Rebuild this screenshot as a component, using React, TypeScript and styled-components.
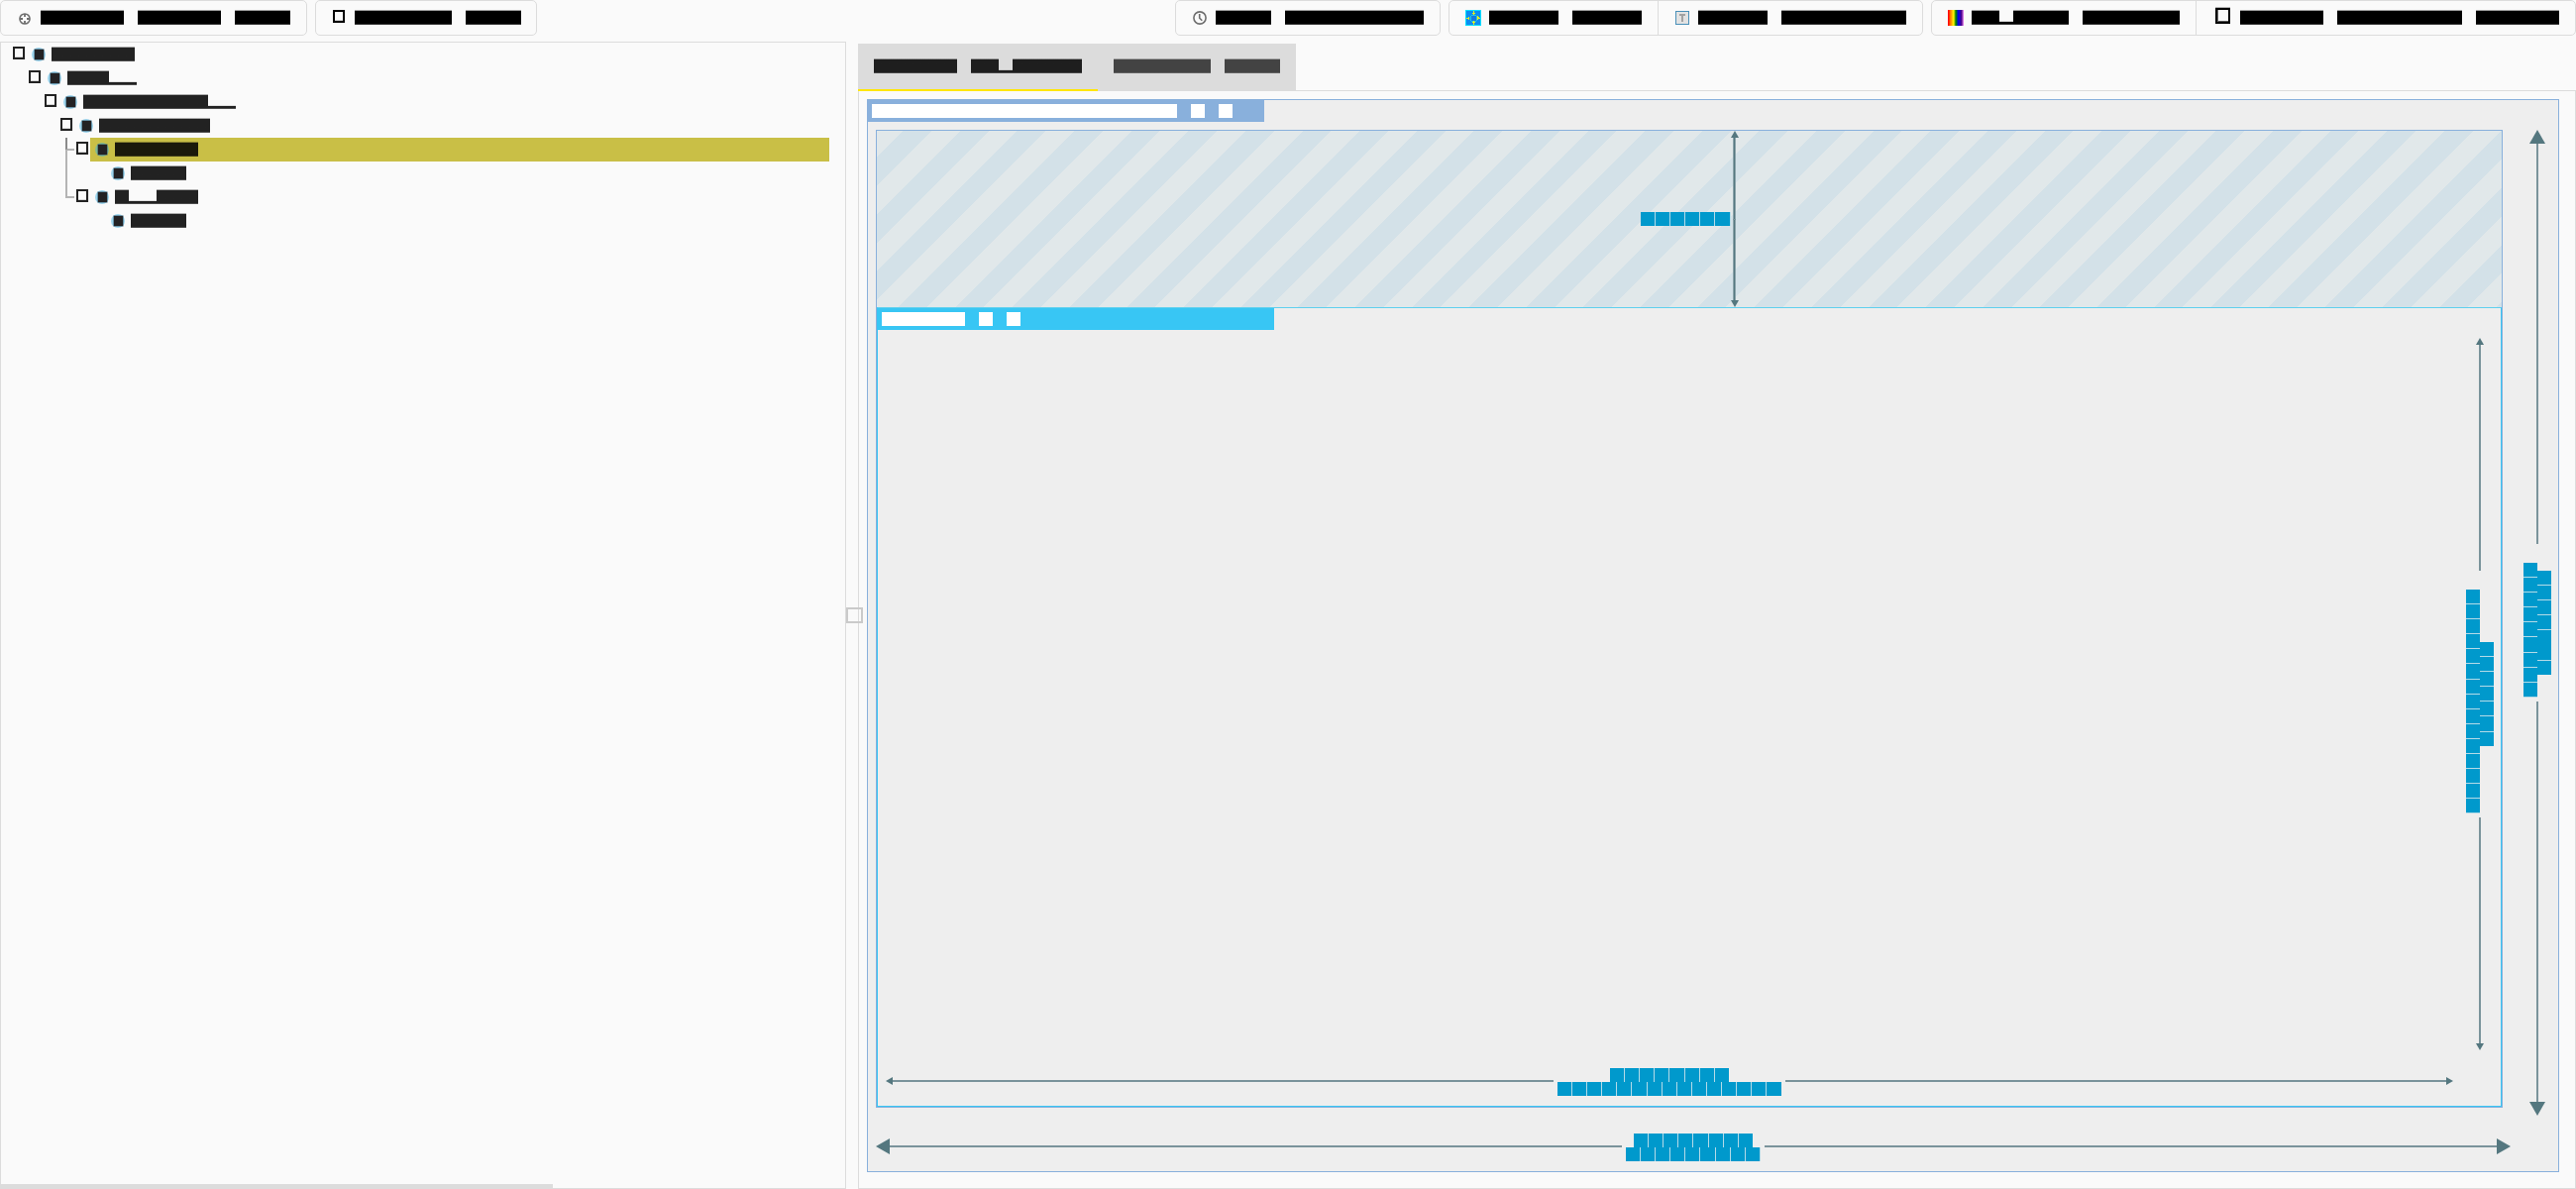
import React from 'react';
import styled, { createGlobalStyle, css } from 'styled-components';

const EDGE = '#dcdcdc';
const DUSTY = '#89b0dc';
const CYAN = '#38c6f4';
const STEEL = '#54777f';
const STEEL_LINE = '#7a939b';
const DIM = '#0099cc';

const Global = createGlobalStyle`
  html, body { margin: 0; background: #fafafa; overflow: hidden; }
  body { font: 14px/14px "Liberation Sans", Arial, sans-serif; color: #000; }
  * { box-sizing: border-box; }
`;

/* ---------- block glyph text ---------- */

const Line = styled.span<{ $color?: string }>`
  display: flex;
  flex: none;
  height: 15px;
  color: ${(p) => p.$color ?? '#000'};
`;

const Run = styled.span<{ $n: number; $kind: string }>`
  width: ${(p) => p.$n * 14}px;
  height: 15px;
  ${(p) =>
    p.$kind === 'X' &&
    css`
      background: linear-gradient(
        color-mix(in srgb, currentColor 36%, transparent) 1px,
        currentColor 1px 14px,
        color-mix(in srgb, currentColor 80%, transparent) 14px
      );
    `}
  ${(p) =>
    p.$kind === 'p' &&
    css`
      height: 3px;
      margin-top: 12px;
      background: linear-gradient(currentColor 2px, color-mix(in srgb, currentColor 80%, transparent) 2px);
      box-shadow: 0 -1px 0 color-mix(in srgb, currentColor 12%, transparent);
    `}
`;

function Blocks({ run, color }: { run: string; color?: string }) {
  const parts = run.match(/X+|p+| +/g) ?? [];
  return (
    <Line $color={color}>
      {parts.map((s, i) => (
        <Run key={i} $n={s.length} $kind={s[0]} />
      ))}
    </Line>
  );
}

const Missing = styled.span<{ $w: number; $h: number; $b?: number; $color?: string }>`
  flex: none;
  width: ${(p) => p.$w}px;
  height: ${(p) => p.$h}px;
  border: ${(p) => p.$b ?? 2}px solid ${(p) => p.$color ?? '#000'};
  box-shadow: inset 0 -1px 0 #d4d4d4, 1px 0 0 #ececec;
`;

/* ---------- toolbar ---------- */

const Page = styled.div`
  width: 2600px;
  height: 1200px;
  display: flex;
  flex-direction: column;
`;

const Toolbar = styled.div`
  display: flex;
  gap: 8px;
  height: 36px;
`;

const Spacer = styled.div`
  flex: 1;
`;

const Group = styled.div`
  display: flex;
  height: 36px;
  border: 1px solid ${EDGE};
  border-radius: 5px;
`;

const Button = styled.div<{ $left: number; $gap: number; $right?: number }>`
  display: flex;
  padding: 9px ${(p) => p.$right ?? 16}px 0 ${(p) => p.$left}px;
  gap: ${(p) => p.$gap}px;
  & + & {
    border-left: 1px solid ${EDGE};
  }
`;

const Icon = styled.svg<{ $top?: number }>`
  display: block;
  flex: none;
  margin-top: ${(p) => p.$top ?? 0}px;
`;

const Rainbow = styled.span`
  width: 16px;
  height: 16px;
  background: linear-gradient(
    90deg,
    #ff0000 1px, #ff3300 1px 2px, #ff7700 2px 3px, #ff9900 3px 4px, #ffc400 4px 5px, #ffee00 5px 6px,
    #b8d800 6px 7px, #3c9a00 7px 8px, #00701c 8px 9px, #003c84 9px 10px, #0000e0 10px 11px, #1a00d8 11px 12px,
    #2c00b4 12px 13px, #4b0090 13px 14px, #8038b0 14px 15px, #d873dc 15px
  );
`;

const TallBox = styled(Missing)`
  margin-top: -2px;
  box-shadow: inset 1px 0 0 #6a6a6a, inset 0 -1px 0 #555, 0 -1px 0 #b4b4b4;
`;

function TargetIcon() {
  return (
    <Icon width="12" height="12" viewBox="0 0 12 12" $top={3}>
      <circle cx="6" cy="6" r="5.1" fill="none" stroke="#6e6e6e" strokeWidth="1.5" />
      <path d="M6 1v3M6 8v3M1 6h3M8 6h3" stroke="#6e6e6e" strokeWidth="1.8" />
    </Icon>
  );
}

function ClockIcon() {
  return (
    <Icon width="14" height="14" viewBox="0 0 14 14" $top={1}>
      <circle cx="7" cy="7" r="6.1" fill="none" stroke="#6e6e6e" strokeWidth="1.6" />
      <path d="M6.7 3v4.2l2.6 2.6" fill="none" stroke="#6e6e6e" strokeWidth="1.6" />
    </Icon>
  );
}

function GuidesIcon() {
  return (
    <Icon width="16" height="16" viewBox="0 0 16 16" shapeRendering="crispEdges">
      <rect width="16" height="16" fill="#00e0ff" />
      <rect x="1" y="1" width="14" height="14" fill="#0a8cf0" />
      <path d="M6 5h5v1h1v5h-1v1h-5v-1h-1v-5h1z" fill="#22c8e0" />
      <rect x="6" y="6" width="5" height="5" fill="#1478e0" />
      <path
        d="M8 1h1v2h1v1h-1v1h-1v-1h-1v-1h1zM8 15h1v-2h1v-1h-1v-1h-1v1h-1v1h1zM1 8h2v-1h1v3h-1v-1h-2zM15 8h-1v-1h-1v-1h-1v4h1v-1h2z"
        fill="#e6ee1c"
      />
    </Icon>
  );
}

function BaselineIcon() {
  return (
    <Icon width="14" height="14" viewBox="0 0 14 14" shapeRendering="crispEdges" $top={1}>
      <rect width="14" height="14" fill="#4a90b8" />
      <rect x="1" y="1" width="12" height="12" fill="#e2e2e2" />
      <path d="M4 3h6v2h-2v6h-2v-6h-2z" fill="#a2a2a2" />
    </Icon>
  );
}

/* ---------- widget tree ---------- */

const Workspace = styled.div`
  flex: 1;
  display: flex;
  min-height: 0;
`;

const TreePanel = styled.div`
  position: relative;
  width: 854px;
  height: 1158px;
  margin-top: 6px;
  border: 1px solid ${EDGE};
`;

const Row = styled.div<{ $depth: number }>`
  position: relative;
  display: flex;
  height: 24px;
  padding: 4px 0 0 ${(p) => 12 + p.$depth * 16}px;
`;

const Body = styled.div<{ $selected?: boolean }>`
  display: flex;
  gap: 6px;
  height: 24px;
  margin-top: -4px;
  padding: 4px 0 0 5px;
  margin-left: 2px;
  ${(p) =>
    p.$selected &&
    css`
      width: 746px;
      background: #c9bf46;
    `}
`;

const Toggle = styled(Missing)<{ $hidden?: boolean }>`
  visibility: ${(p) => (p.$hidden ? 'hidden' : 'visible')};
`;

const Dot = styled.span<{ $selected?: boolean }>`
  display: flex;
  align-items: center;
  justify-content: center;
  width: 14px;
  height: 14px;
  margin-top: 1px;
  border-radius: 50%;
  background: ${(p) => (p.$selected ? '#82ba92' : '#9fd6ee')};
  &::after {
    content: '';
    width: 9px;
    height: 10px;
    background: #232224;
    box-shadow: 0 0 0 0.5px #35566a;
  }
`;

const Guide = styled.span<{ $h: number; $color: string }>`
  position: absolute;
  left: 65px;
  top: ${(p) => 12 - p.$h}px;
  width: 9px;
  height: ${(p) => p.$h + 1}px;
  border-left: 2px solid ${(p) => p.$color};
  border-bottom: 2px solid #b4b4b4;
`;

const ScrollThumb = styled.div`
  position: absolute;
  left: -1px;
  bottom: -1px;
  width: 558px;
  height: 5px;
  background: ${EDGE};
`;

type Node = { run: string; depth: number; leaf?: boolean; selected?: boolean; guide?: [number, string] };

const tree: Node[] = [
  { run: 'XXXXXX', depth: 0 },
  { run: 'XXXpp', depth: 1 },
  { run: 'XXXXXXXXXpp', depth: 2 },
  { run: 'XXXXXXXX', depth: 3 },
  { run: 'XXXXXX', depth: 4, selected: true, guide: [12, '#8a8a8a'] },
  { run: 'XXXX', depth: 5, leaf: true },
  { run: 'XppXXX', depth: 4, guide: [48, '#b4b4b4'] },
  { run: 'XXXX', depth: 5, leaf: true },
];

/* ---------- splitter ---------- */

const Splitter = styled.div`
  position: relative;
  width: 12px;
`;

const Grip = styled.div`
  position: absolute;
  left: 0;
  top: 577px;
  width: 17px;
  height: 16px;
  border: 2px solid #cacaca;
  z-index: 1;
`;

/* ---------- details ---------- */

const Details = styled.div`
  width: 1734px;
  display: flex;
  flex-direction: column;
`;

const Tabs = styled.div`
  display: flex;
  height: 48px;
  margin-top: 8px;
  box-shadow: inset 0 -1px 0 ${EDGE};
`;

const Tab = styled.div<{ $active?: boolean }>`
  height: 48px;
  padding: 15px 16px 0;
  background: #dcdcdc;
  border-bottom: 2px solid ${(p) => (p.$active ? '#ffe600' : '#dcdcdc')};
`;

const Pane = styled.div`
  flex: 1;
  border: 1px solid ${EDGE};
  border-top: 0;
  padding: 8px 16px 16px 8px;
`;

const Outer = styled.div`
  height: 1083px;
  border: 1px solid ${DUSTY};
  background: #eeeeee;
  display: grid;
  padding-left: 8px;
  grid-template-columns: 1642px 1fr;
  grid-template-rows: 30px 987px 1fr;
`;

const Title = styled.div<{ $color: string; $shift?: number }>`
  display: flex;
  width: 400px;
  height: 22px;
  margin-left: ${(p) => p.$shift ?? 0}px;
  padding: 4px 0 0 4px;
  background: ${(p) => p.$color};
`;

const TitleWord = styled.span<{ $n: number }>`
  width: ${(p) => p.$n * 14}px;
  height: 14px;
  margin-right: 14px;
  background: #fff;
`;

const Inner = styled.div`
  border: 1px solid ${DUSTY};
  display: flex;
  flex-direction: column;
`;

const Stripes = styled.div`
  display: flex;
  align-items: center;
  height: 178px;
  padding-left: 771px;
  background: repeating-linear-gradient(
    135deg,
    #e1e8ea 0 18.88px,
    #d3e1e8 18.88px 39.25px,
    #e1e8ea 39.25px 40.74px
  );
`;

const Child = styled.div`
  flex: 1;
  border: 1px solid ${CYAN};
  border-top-color: #5fd0ee;
  display: flex;
  flex-direction: column;
`;

const ArrowRow = styled.div<{ $w: number }>`
  display: flex;
  align-items: center;
  width: ${(p) => p.$w}px;
  height: 30px;
`;

const ArrowCol = styled.div<{ $h: number }>`
  display: flex;
  flex-direction: column;
  align-items: center;
  width: 30px;
  height: ${(p) => p.$h}px;
`;

const Stroke = styled.div<{ $vertical?: boolean }>`
  flex: 1;
  background: ${STEEL_LINE};
  ${(p) => (p.$vertical ? 'width: 2px;' : 'height: 2px;')}
`;

const LabelRow = styled.div`
  display: flex;
  flex-direction: column;
  align-items: center;
  padding: 1px 4px 0;
`;

const LabelCol = styled.div`
  display: flex;
  flex-direction: row-reverse;
  align-items: center;
  padding: 4px 0;
`;

const Cells = styled.div<{ $n: number; $lead: number; $vertical?: boolean }>`
  flex: none;
  ${(p) => {
    const span = p.$n * 15.1;
    const dir = p.$vertical ? 'to bottom' : 'to right';
    const pad = p.$lead * 15.1;
    return css`
      ${p.$vertical ? `width: 14px; height: ${span}px; margin-top: ${pad}px;` : `height: 14px; width: ${span}px;`}
      background: repeating-linear-gradient(${dir}, ${DIM} 0 14.1px, #b4dbe8 14.1px 15.1px);
    `;
  }}
`;

function Head({ dir, size }: { dir: 'up' | 'down' | 'left' | 'right'; size: number }) {
  const wide = size;
  const long = size === 16 ? 14 : 7;
  const vertical = dir === 'up' || dir === 'down';
  const w = vertical ? wide : long;
  const h = vertical ? long : wide;
  const points = {
    up: `0,${h} ${w / 2},0 ${w},${h}`,
    down: `0,0 ${w / 2},${h} ${w},0`,
    left: `${w},0 0,${h / 2} ${w},${h}`,
    right: `0,0 ${w},${h / 2} 0,${h}`,
  }[dir];
  return (
    <Icon width={w} height={h} viewBox={`0 0 ${w} ${h}`}>
      <polygon points={points} fill={STEEL} />
    </Icon>
  );
}

function HDimension({ w, size, top, bottom }: { w: number; size: number; top: number; bottom: number }) {
  return (
    <ArrowRow $w={w}>
      <Head dir="left" size={size} />
      <Stroke />
      <LabelRow>
        <Cells $n={top} $lead={0} />
        <Cells $n={bottom} $lead={0} />
      </LabelRow>
      <Stroke />
      <Head dir="right" size={size} />
    </ArrowRow>
  );
}

function VDimension({ h, size, right, left }: { h: number; size: number; right: number; left: number }) {
  return (
    <ArrowCol $h={h}>
      <Head dir="up" size={size} />
      <Stroke $vertical />
      <LabelCol>
        <Cells $vertical $n={right} $lead={0} />
        <Cells $vertical $n={left} $lead={1} />
      </LabelCol>
      <Stroke $vertical />
      <Head dir="down" size={size} />
    </ArrowCol>
  );
}

const StripeArrow = styled.div`
  display: flex;
  flex-direction: column;
  align-items: center;
  height: 178px;
  width: 9px;
  margin-left: -0.6px;
`;

const StripeStroke = styled.div`
  flex: 1;
  width: 3px;
  background: linear-gradient(90deg, #8ba3aa 1px, ${STEEL} 1px 2px, #8ba3aa 2px);
  & + & {
    border-top: 1px solid #7a939b;
  }
`;

const OuterRight = styled.div`
  padding-left: 20px;
`;

const OuterBottom = styled.div`
  padding-top: 24px;
  grid-column: 1 / 3;
`;

const InnerRight = styled.div`
  display: flex;
  justify-content: flex-end;
  padding: 8px 6px 0 0;
`;

const InnerBottom = styled.div`
  padding: 16px 0 0 8px;
`;

export default function App() {
  return (
    <Page>
      <Global />
      <Toolbar>
        <Group>
          <Button $left={18} $gap={10}>
            <TargetIcon />
            <Blocks run="XXXXXX XXXXXX XXXX" />
          </Button>
        </Group>
        <Group>
          <Button $left={17} $gap={10} $right={15}>
            <Missing $w={12} $h={13} />
            <Blocks run="XXXXXXX XXXX" />
          </Button>
        </Group>
        <Spacer />
        <Group>
          <Button $left={17} $gap={9}>
            <ClockIcon />
            <Blocks run="XXXX XXXXXXXXXX" />
          </Button>
        </Group>
        <Group>
          <Button $left={16} $gap={8}>
            <GuidesIcon />
            <Blocks run="XXXXX XXXXX" />
          </Button>
          <Button $left={17} $gap={9}>
            <BaselineIcon />
            <Blocks run="XXXXX XXXXXXXXX" />
          </Button>
        </Group>
        <Group>
          <Button $left={16} $gap={8}>
            <Rainbow />
            <Blocks run="XXpXXXX XXXXXXX" />
          </Button>
          <Button $left={19} $gap={10}>
            <TallBox $w={15} $h={16} />
            <Blocks run="XXXXXX XXXXXXXXX XXXXXX" />
          </Button>
        </Group>
      </Toolbar>
      <Workspace>
        <TreePanel>
          {tree.map((n, i) => (
            <Row key={i} $depth={n.depth}>
              {n.guide && <Guide $h={n.guide[0]} $color={n.guide[1]} />}
              <Toggle $w={12} $h={13} $color="#222222" $hidden={n.leaf} />
              <Body $selected={n.selected}>
                <Dot $selected={n.selected} />
                <Blocks run={n.run} color={n.selected ? '#1b190b' : '#222222'} />
              </Body>
            </Row>
          ))}
          <ScrollThumb />
        </TreePanel>
        <Splitter>
          <Grip />
        </Splitter>
        <Details>
          <Tabs>
            <Tab $active>
              <Blocks run="XXXXXX XXpXXXXX" color="#1e1e1e" />
            </Tab>
            <Tab>
              <Blocks run="XXXXXXX XXXX" color="#434343" />
            </Tab>
          </Tabs>
          <Pane>
            <Outer>
              <Title $color={DUSTY} $shift={-8}>
                <TitleWord $n={22} />
                <TitleWord $n={1} />
                <TitleWord $n={1} />
              </Title>
              <span />
              <Inner>
                <Stripes>
                  <Cells $n={6} $lead={0} />
                  <StripeArrow>
                    <Head dir="up" size={8} />
                    <StripeStroke />
                    <StripeStroke />
                    <Head dir="down" size={8} />
                  </StripeArrow>
                </Stripes>
                <Child>
                  <Title $color={CYAN}>
                    <TitleWord $n={6} />
                    <TitleWord $n={1} />
                    <TitleWord $n={1} />
                  </Title>
                  <InnerRight>
                    <VDimension h={719} size={8} right={7} left={15} />
                  </InnerRight>
                  <InnerBottom>
                    <HDimension w={1582} size={8} top={8} bottom={15} />
                  </InnerBottom>
                </Child>
              </Inner>
              <OuterRight>
                <VDimension h={995} size={16} right={7} left={9} />
              </OuterRight>
              <OuterBottom>
                <HDimension w={1650} size={16} top={8} bottom={9} />
              </OuterBottom>
            </Outer>
          </Pane>
        </Details>
      </Workspace>
    </Page>
  );
}
